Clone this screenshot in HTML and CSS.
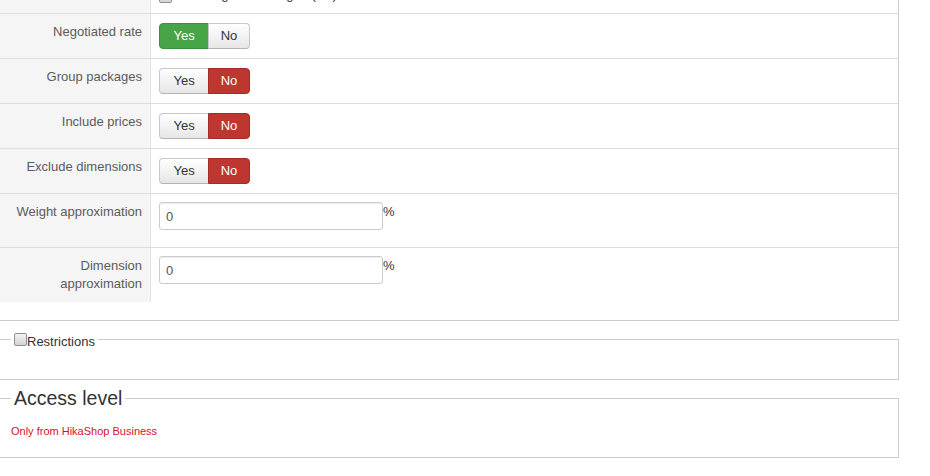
FILE: index.html
```html
<!DOCTYPE html>
<html lang="en">
<head>
<meta charset="utf-8">
<title>Shipping options</title>
<link rel="stylesheet" href="styles.css">
</head>
<body>
<div class="page">
  <fieldset class="box params">
    <div class="rows">
      <div class="row first">
        <div class="key"></div>
        <div class="val"><label class="check"><input type="checkbox" class="cb">Use weight rounding to (lbs)</label></div>
      </div>
      <div class="row">
        <div class="key">Negotiated rate</div>
        <div class="val"><div class="btn-group"><span class="btn yes active">Yes</span><span class="btn no">No</span></div></div>
      </div>
      <div class="row">
        <div class="key">Group packages</div>
        <div class="val"><div class="btn-group"><span class="btn yes">Yes</span><span class="btn no active">No</span></div></div>
      </div>
      <div class="row">
        <div class="key">Include prices</div>
        <div class="val"><div class="btn-group"><span class="btn yes">Yes</span><span class="btn no active">No</span></div></div>
      </div>
      <div class="row">
        <div class="key">Exclude dimensions</div>
        <div class="val"><div class="btn-group"><span class="btn yes">Yes</span><span class="btn no active">No</span></div></div>
      </div>
      <div class="row">
        <div class="key">Weight approximation</div>
        <div class="val inputs"><input type="text" class="field" value="0"><span class="unit">%</span></div>
      </div>
      <div class="row">
        <div class="key">Dimension approximation</div>
        <div class="val inputs"><input type="text" class="field" value="0"><span class="unit">%</span></div>
      </div>
    </div>
  </fieldset>

  <fieldset class="box restrictions">
    <legend class="legend-small"><input type="checkbox" class="cb">Restrictions</legend>
  </fieldset>

  <fieldset class="box access">
    <legend class="legend-big">Access level</legend>
    <p class="notice">Only from HikaShop Business</p>
  </fieldset>
</div>
</body>
</html>
```

FILE: styles.css
```css
html, body {
  margin: 0;
  background: #fff;
}

body {
  font-family: "Liberation Sans", Arial, sans-serif;
  font-size: 13px;
  color: #333;
}

.page {
  width: 899px;
  margin-top: -24px;
}

.box {
  margin: 0;
  border: 1px solid #cccccc;
  border-left: 0;
  min-width: 0;
}

.params {
  padding: 0 0 18px 0;
}

.row {
  display: grid;
  grid-template-columns: 151px 1fr;
  border-top: 1px solid #dddddd;
}

.row.first {
  border-top: 0;
}

.key {
  box-sizing: border-box;
  background: #f5f5f5;
  border-right: 1px solid #e3e3e3;
  padding: 9px 8px;
  text-align: right;
  line-height: 18px;
  color: #5b5b5b;
}

.val {
  padding: 9px 8px;
  line-height: 18px;
}

.val.inputs {
  padding: 8px;
  display: flex;
  align-items: flex-start;
}

.check {
  color: #333;
}

.cb {
  -webkit-appearance: none;
  appearance: none;
  box-sizing: border-box;
  width: 13px;
  height: 13px;
  margin: 0 3px 0 0;
  border: 1px solid #8f8f8f;
  border-radius: 2px;
  background: linear-gradient(#f2f2f2, #d4d4d4);
}

.check .cb {
  vertical-align: -4px;
}

.btn-group {
  display: flex;
}

.btn {
  display: block;
  padding: 3px 12px;
  line-height: 18px;
  font-size: 13px;
  color: #333;
  border: 1px solid #c8c8c8;
  border-bottom-color: #b3b3b3;
  background: linear-gradient(#ffffff, #e6e6e6);
}

.btn.yes {
  padding: 3px 13.5px;
}

.btn.no {
  padding: 3px 11.5px;
}

.btn + .btn {
  margin-left: -1px;
}

.btn:first-child {
  border-radius: 4px 0 0 4px;
}

.btn:last-child {
  border-radius: 0 4px 4px 0;
}

.btn.yes.active {
  background: #47a447;
  border-color: #3d8f3d;
  color: #fff;
}

.btn.no.active {
  background: #bd362f;
  border-color: #a52c26;
  color: #fff;
}

.field {
  box-sizing: border-box;
  width: 224px;
  height: 28px;
  margin: 0 0 9px 0;
  padding: 4px 6px;
  border: 1px solid #cccccc;
  border-radius: 3px;
  box-shadow: inset 0 1px 1px rgba(0, 0, 0, 0.075);
  font-family: "Liberation Sans", Arial, sans-serif;
  font-size: 13px;
  color: #555;
  background: #fff;
}

.unit {
  line-height: 18px;
  padding-top: 1px;
  color: #333;
}

.restrictions {
  margin-top: 9px;
  padding: 0 0 30px 11px;
}

.legend-small {
  padding: 0 3px;
  line-height: 15px;
  font-size: 13px;
  color: #333;
}

.legend-small .cb {
  margin: 3px 0 0 0;
  vertical-align: baseline;
}

.access {
  margin-top: 7px;
  padding: 0 0 0 11px;
}

.legend-big {
  padding: 0 3px;
  font-size: 19.5px;
  color: #333;
}

.notice {
  margin: 14px 0 18px 0;
  font-size: 11px;
  line-height: 15px;
  color: #d8102a;
}
```
